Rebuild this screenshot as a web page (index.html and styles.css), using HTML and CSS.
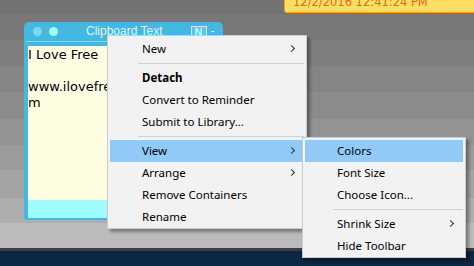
FILE: index.html
```html
<html>
<head>
  <link rel="stylesheet" href="styles.css">
</head>
<body>
  <div class="desk">
    <div class="wall">
      <div class="stamp">12/2/2016 12:41:24 PM</div>

      <div class="note">
        <div class="note-bar">
          <span class="dot dot-a"></span>
          <span class="dot dot-b"></span>
          <span class="note-title">Clipboard Text</span>
          <span class="note-key">N</span>
          <span class="note-min">-</span>
        </div>
        <div class="note-rule"></div>
        <div class="note-body">I Love Free<br><br>www.ilovefreesoftware.co<br>m</div>
        <div class="note-foot"></div>
      </div>

      <ul class="menu menu-main">
        <li class="item more">New</li>
        <li class="sep"></li>
        <li class="item bold">Detach</li>
        <li class="item">Convert to Reminder</li>
        <li class="item">Submit to Library...</li>
        <li class="sep"></li>
        <li class="item more hot">View</li>
        <li class="item more">Arrange</li>
        <li class="item">Remove Containers</li>
        <li class="item">Rename</li>
      </ul>

      <ul class="menu menu-sub">
        <li class="item hot">Colors</li>
        <li class="item">Font Size</li>
        <li class="item">Choose Icon...</li>
        <li class="sep"></li>
        <li class="item more">Shrink Size</li>
        <li class="item">Hide Toolbar</li>
      </ul>
    </div>
    <div class="taskbar"></div>
  </div>
</body>
</html>
```

FILE: styles.css
```css
body {
  margin: 0;
  width: 474px;
  height: 266px;
  overflow: hidden;
}

.desk {
  display: flex;
  flex-direction: column;
  height: 266px;
}

/* desktop bands, darker at the top */
.wall {
  position: relative;
  flex: 1;
  background: linear-gradient(to bottom,
    #737373 0, #737373 14px,
    #787878 14px, #787878 40px,
    #7e7e7e 40px, #7e7e7e 66px,
    #858585 66px, #858585 92px,
    #8b8b8b 92px, #8b8b8b 119px,
    #939393 119px, #939393 145px,
    #9b9b9b 145px, #9b9b9b 170px,
    #a4a4a4 170px, #a4a4a4 198px,
    #aeaeae 198px, #aeaeae 223px,
    #bbbbbb 223px, #bbbbbb 248px);
}

.taskbar {
  height: 15px;
  border-top: 3px solid #3d3d3d;
  background: #0b2746;
}

/* reminder strip */
.stamp {
  position: absolute;
  left: 284px;
  top: -10px;
  width: 200px;
  height: 23px;
  box-sizing: border-box;
  padding: 4px 0 0 8px;
  background: #ffdf63;
  border: 1px solid #f2a02a;
  border-radius: 0 0 0 3px;
  color: #e4661c;
  font-family: "DejaVu Sans", sans-serif;
  font-size: 11.5px;
  line-height: 15px;
}

/* sticky note */
.note {
  position: absolute;
  left: 24px;
  top: 22px;
  width: 199px;
  height: 198px;
  box-sizing: border-box;
  padding: 0 3px 2px 4px;
  display: flex;
  flex-direction: column;
  background: #45b8e0;
  border-radius: 5px 5px 3px 3px;
}

.note-bar {
  height: 18px;
  display: flex;
  align-items: center;
  font-family: "Liberation Sans", sans-serif;
  font-size: 12px;
  color: #dcf5fc;
}

.dot {
  width: 9px;
  height: 9px;
  border-radius: 50%;
}

.dot-a {
  margin-left: 5px;
  background: #7cd7f0;
}

.dot-b {
  margin-left: 7px;
  background: #a2fbfb;
}

.note-title {
  margin-left: 28px;
}

.note-key {
  margin-left: 28px;
  width: 14px;
  height: 9px;
  border: 1px solid #d9e9ef;
  background: #5bc6ea;
  color: #c8f6ff;
  font-size: 11px;
  line-height: 10px;
  text-align: center;
  font-weight: bold;
}

.note-min {
  margin-left: 4px;
  color: #dcf5fc;
}

.note-rule {
  height: 1px;
  margin: 1px 0 4px -2px;
  background: #84dbf2;
}

.note-body {
  flex: 1;
  padding-top: 1px;
  background: #fffde1;
  color: #000;
  font-family: "DejaVu Sans", sans-serif;
  font-size: 13px;
  line-height: 16px;
  overflow: hidden;
  white-space: nowrap;
}

.note-foot {
  height: 18px;
  background: #9ffcfc;
}

/* context menus */
.menu {
  position: absolute;
  margin: 0;
  padding: 2px 2px 0;
  list-style: none;
  box-sizing: border-box;
  background: #f2f2f2;
  border: 1px solid #cccccc;
  box-shadow: 3px 3px 3px rgba(0, 0, 0, 0.35);
  font-family: "Noto Sans", sans-serif;
  font-size: 11.5px;
  color: #000;
}

.menu-main {
  left: 107px;
  top: 35px;
  width: 200px;
}

.menu-sub {
  left: 302px;
  top: 137px;
  width: 164px;
}

.item {
  position: relative;
  height: 22px;
  line-height: 22px;
  padding-left: 32px;
}

.item.bold {
  font-weight: bold;
}

.item.hot {
  background: #91c9f7;
}

.item.more::after {
  content: "";
  position: absolute;
  right: 10px;
  top: 8px;
  width: 4px;
  height: 4px;
  border-top: 1px solid #333;
  border-right: 1px solid #333;
  transform: rotate(45deg);
}

.sep {
  height: 1px;
  margin: 3px 0 3px 28px;
  background: #d0d0d0;
}
```
